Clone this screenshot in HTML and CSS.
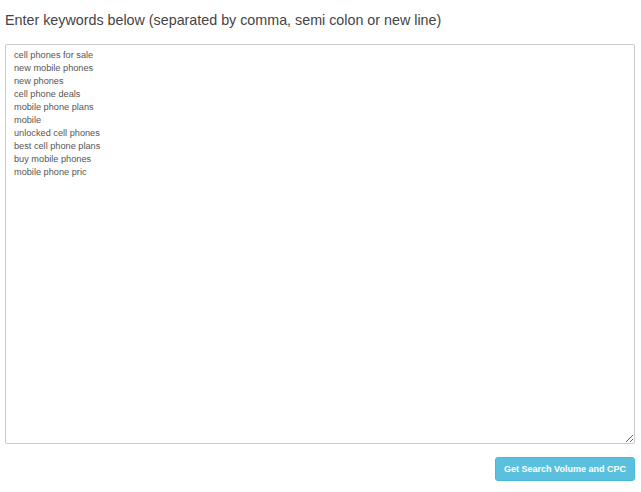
FILE: index.html
```html
<!DOCTYPE html>
<html>
<head>
  <link rel="stylesheet" href="styles.css">
</head>
<body>
  <div class="container">
    <label class="title" for="keywords">Enter keywords below (separated by comma, semi colon or new line)</label>
    <textarea id="keywords" class="keywords">cell phones for sale
new mobile phones
new phones
cell phone deals
mobile phone plans
mobile
unlocked cell phones
best cell phone plans
buy mobile phones
mobile phone pric</textarea>
    <div class="actions">
      <button class="btn-info">Get Search Volume and CPC</button>
    </div>
  </div>
</body>
</html>
```

FILE: styles.css
```css
/* Keyword volume form */

body {
  font-family: "Liberation Sans", Arial, sans-serif;
  margin: 0;
  padding: 0 6px 0 5px;
  background: #ffffff;
  color: #444444;
}

.container {
  display: flex;
  flex-direction: column;
}

.title {
  display: block;
  font-size: 14.3px;
  line-height: 18px;
  padding-top: 11px;
  margin-bottom: 15px;
  color: #444444;
}

.keywords {
  box-sizing: border-box;
  width: 630px;
  height: 400px;
  padding: 4px 8px;
  font-family: "Liberation Sans", Arial, sans-serif;
  font-size: 9.2px;
  line-height: 13px;
  color: #555555;
  border: 1px solid #cccccc;
  border-radius: 2px;
  margin: 0;
  outline: none;
}

.actions {
  display: flex;
  justify-content: flex-end;
  padding-top: 13px;
}

.btn-info {
  font-family: "Liberation Sans", Arial, sans-serif;
  font-size: 9px;
  font-weight: bold;
  white-space: nowrap;
  color: #ffffff;
  background-color: #5bc0de;
  border: 1px solid #46b8da;
  border-radius: 3px;
  padding: 0;
  height: 24px;
  width: 140px;
  cursor: pointer;
}
```
